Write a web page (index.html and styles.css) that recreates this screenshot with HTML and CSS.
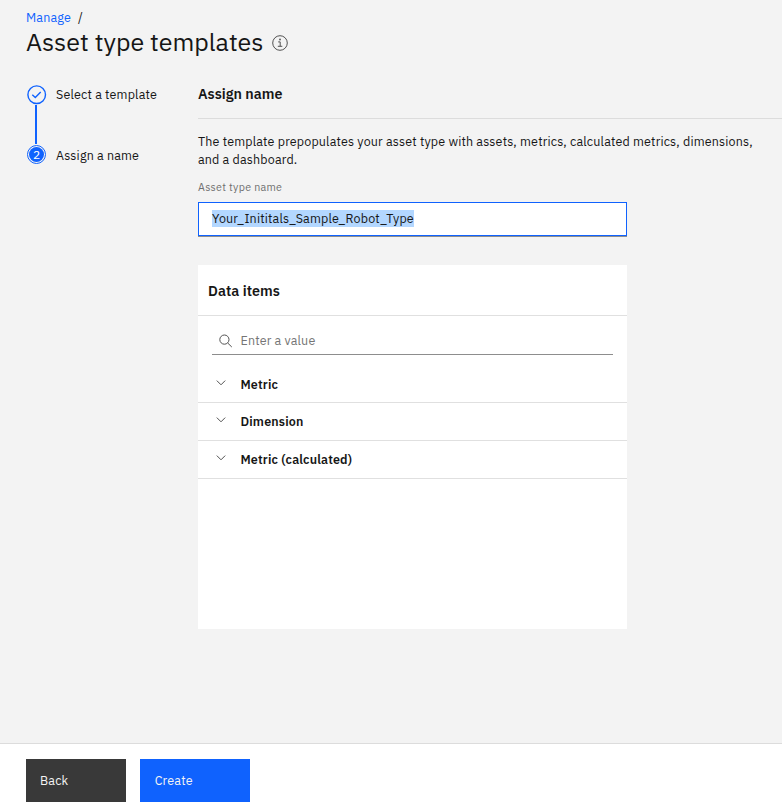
FILE: index.html
```html
<!DOCTYPE html>
<html lang="en">
<head>
<meta charset="utf-8">
<title>Asset type templates</title>
<link rel="stylesheet" href="styles.css">
</head>
<body>
<div class="page">
  <header class="header">
    <nav class="breadcrumb"><a class="crumb">Manage</a><span>/</span></nav>
    <div class="heading">
      <h1 class="title">Asset type templates</h1>
      <svg class="info" width="16" height="16" viewBox="0 0 16 16" fill="none" stroke="#525252"><circle cx="8" cy="8" r="7.3"/><path d="M6.2 6.9H8.2V11.2M5.8 11.3H10.3"/><circle cx="8" cy="4.5" r=".9" fill="#525252" stroke="none"/></svg>
    </div>
  </header>
  <main class="main">
    <ol class="steps">
      <li class="step">
        <svg width="20" height="20" viewBox="0 0 20 20" fill="none" stroke="#0f62fe" stroke-width="1.4"><circle cx="9.7" cy="9.7" r="8.8"/><path d="M5.3 9.8L8.3 12.6L13.7 7.1"/></svg>
        <span class="step-label">Select a template</span>
      </li>
      <li class="connector"></li>
      <li class="step">
        <span class="current"><span class="number">2</span></span>
        <span>Assign a name</span>
      </li>
    </ol>
    <section class="content">
      <h2 class="section-title">Assign name</h2>
      <p class="description">The template prepopulates your asset type with assets, metrics, calculated metrics, dimensions,<br>and a dashboard.</p>
      <label class="field-label">Asset type name</label>
      <div class="field"><span class="selected">Your_Inititals_Sample_Robot_Type</span></div>
      <div class="card">
        <h3 class="card-title">Data items</h3>
        <div class="search">
          <svg width="14" height="14" viewBox="0 0 14 14" fill="none" stroke="#525252"><circle cx="5.4" cy="5.6" r="4.6"/><path d="M8.7 9L12.8 13"/></svg>
          <span>Enter a value</span>
        </div>
        <div class="row first"><svg class="chevron" width="10" height="6" viewBox="0 0 10 6"><path d="M.8 .6L5 4.8L9.2 .6"/></svg><span>Metric</span></div>
        <div class="row"><svg class="chevron" width="10" height="6" viewBox="0 0 10 6"><path d="M.8 .6L5 4.8L9.2 .6"/></svg><span>Dimension</span></div>
        <div class="row"><svg class="chevron" width="10" height="6" viewBox="0 0 10 6"><path d="M.8 .6L5 4.8L9.2 .6"/></svg><span>Metric (calculated)</span></div>
      </div>
    </section>
  </main>
  <footer class="footer">
    <button class="button back">Back</button>
    <button class="button create">Create</button>
  </footer>
</div>
</body>
</html>
```

FILE: styles.css
```css
* { box-sizing: border-box; }
body { margin: 0; background: #f3f3f3; color: #161616; font: 12.5px/18px "IBM Plex Sans", Roboto, sans-serif; letter-spacing: .16px; }
h1, h2, h3, p, ol { margin: 0; padding: 0; }
svg { display: block; flex: none; }
.page { height: 811px; display: flex; flex-direction: column; overflow: hidden; }
.header { height: 84px; padding: 8px 0 0 26px; }
.breadcrumb { display: flex; gap: 7px; height: 18px; }
.crumb { color: #0f62fe; }
.heading { display: flex; gap: 9px; }
.title { font-size: 25px; line-height: 32px; font-weight: 400; letter-spacing: 0; width: 237px; white-space: nowrap; }
.info { margin-top: 9px; }
.main { flex: 1; display: flex; }
.steps { flex: none; width: 198px; padding-left: 27px; list-style: none; }
.step { display: flex; align-items: center; gap: 9px; height: 21px; white-space: nowrap; }
.step-label { padding-bottom: 2px; }
.connector { width: 2px; height: 39px; margin-left: 8px; background: #0f62fe; }
.current { width: 19px; height: 19px; margin-right: 1px; border: 1.3px solid #0f62fe; border-radius: 50%; padding: 1px; flex: none; }
.number { display: block; width: 100%; height: 100%; border-radius: 50%; background: #0f62fe; color: #fff; font-size: 12px; line-height: 15px; text-align: center; letter-spacing: 0; }
.content { flex: 1; min-width: 0; }
.section-title { height: 35px; padding-top: 1px; border-bottom: 1px solid #dcdcdc; font-size: 14.3px; font-weight: 600; letter-spacing: 0; }
.description { margin-top: 13px; white-space: nowrap; }
.field-label { display: block; margin-top: 11px; font-size: 10.7px; line-height: 16px; letter-spacing: .286px; color: #6f6f6f; }
.field { width: 429px; height: 34px; margin-top: 7px; padding: 6px 13px; background: #fff; border: 1px solid #0f62fe; box-shadow: 0 1px #8d8d8d; }
.selected { display: inline-block; height: 17px; line-height: 17px; background: #b3d7ff; }
.card { width: 429px; height: 364px; margin-top: 29px; background: #fff; }
.card-title { height: 51px; padding: 17px 0 0 10px; border-bottom: 1px solid #e0e0e0; font-size: 14.3px; font-weight: 600; letter-spacing: .05px; }
.search { display: flex; gap: 7.5px; height: 39px; margin: 0 14px 10px; padding: 15px 0 0 7px; border-bottom: 1px solid #8d8d8d; color: #757575; }
.search svg { margin-top: 3px; }
.row { display: flex; height: 38px; padding: 9px 0 0 18px; gap: 14.5px; border-bottom: 1px solid #e0e0e0; font-weight: 600; }
.first { padding-top: 10px; }
.chevron { margin-top: 5px; fill: none; stroke: #525252; stroke-width: 1; }
.footer { height: 68px; padding-top: 15px; padding-left: 26px; display: flex; gap: 14px; background: #fff; border-top: 1px solid #dcdcdc; flex: none; }
.button { height: 43px; border: 0; padding: 0 14px 2px; text-align: left; color: #f4f4f4; font: inherit; letter-spacing: .16px; }
.back { width: 100px; background: #393939; }
.create { width: 110px; padding-left: 14.7px; background: #0f62fe; }
```
